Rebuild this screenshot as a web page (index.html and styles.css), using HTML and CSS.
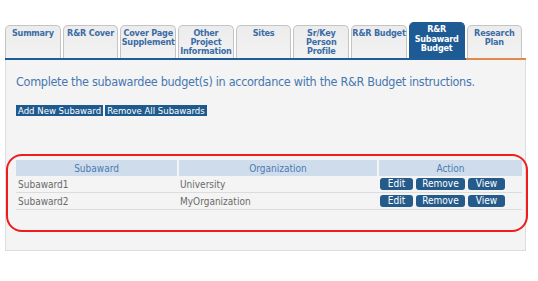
FILE: index.html
```html
<!DOCTYPE html>
<html>
<head>
<meta charset="utf-8">
<link rel="stylesheet" href="styles.css">
</head>
<body>
<div class="page">
  <div class="tabs">
    <div class="tab">Summary</div>
    <div class="tab">R&amp;R Cover</div>
    <div class="tab">Cover Page Supplement</div>
    <div class="tab">Other Project Information</div>
    <div class="tab">Sites</div>
    <div class="tab">Sr/Key Person Profile</div>
    <div class="tab">R&amp;R Budget</div>
    <div class="tab active">R&amp;R Subaward Budget</div>
    <div class="tab">Research Plan</div>
  </div>
  <div class="progress"><div class="done"></div><div class="todo"></div></div>
  <div class="panel">
    <p class="intro">Complete the subawardee budget(s) in accordance with the R&amp;R Budget instructions.</p>
    <div class="toolbar">
      <span class="tbtn">Add New Subaward</span>
      <span class="tbtn">Remove All Subawards</span>
    </div>
    <div class="tablewrap">
      <table class="grid">
        <thead>
          <tr><th class="c1">Subaward</th><th class="c2">Organization</th><th class="c3">Action</th></tr>
        </thead>
        <tbody>
          <tr><td>Subaward1</td><td>University</td><td class="acts"><span class="btn edit">Edit</span><span class="btn remove">Remove</span><span class="btn view">View</span></td></tr>
          <tr><td>Subaward2</td><td>MyOrganization</td><td class="acts"><span class="btn edit">Edit</span><span class="btn remove">Remove</span><span class="btn view">View</span></td></tr>
        </tbody>
      </table>
      <div class="highlight"></div>
    </div>
  </div>
</div>
</body>
</html>
```
FILE: styles.css
```css
html, body {
  margin: 0;
  padding: 0;
  background: #ffffff;
}
.page {
  width: 538px;
  font-family: "DejaVu Sans Condensed", "DejaVu Sans", sans-serif;
}
.tabs {
  display: flex;
  align-items: flex-end;
  gap: 2px;
  padding-left: 5px;
  padding-top: 22px;
  height: 36px;
}
.tab {
  box-sizing: border-box;
  width: 55.7px;
  height: 33px;
  border: 1px solid #c4c4c4;
  border-bottom: none;
  border-radius: 5px 5px 0 0;
  background: linear-gradient(#ececec, #f2f2f2);
  color: #3b6ca5;
  font-weight: bold;
  font-size: 9px;
  letter-spacing: -0.2px;
  line-height: 9px;
  text-align: center;
  padding: 3px 0 0 0;
}
.tab.active {
  height: 36px;
  background: #1e5a94;
  border-color: #1e5a94;
  color: #ffffff;
  padding-top: 2px;
  line-height: 9.5px;
}
.progress {
  display: flex;
  margin-left: 5px;
  width: 521px;
  height: 2px;
}
.progress .done {
  width: 461px;
  background: #1f5c9a;
}
.progress .todo {
  flex: 1;
  background: #e0894b;
}
.panel {
  box-sizing: border-box;
  margin-left: 5px;
  width: 521px;
  height: 191px;
  background: #f4f4f4;
  border: 1px solid #dddddd;
  border-top: none;
  padding: 14px 0 0 10px;
}
.intro {
  margin: 0;
  font-size: 12.5px;
  letter-spacing: -0.3px;
  line-height: 16px;
  color: #4677b0;
}
.toolbar {
  display: flex;
  gap: 2px;
  margin-top: 15px;
}
.tbtn {
  background: #1e5a8e;
  color: #ffffff;
  font-size: 9.5px;
  line-height: 11px;
  padding: 0 2px;
}
.tablewrap {
  position: relative;
  margin-top: 44px;
  width: 506px;
}
.grid {
  width: 506px;
  border-collapse: collapse;
  font-size: 10px;
  color: #6a6a6a;
  table-layout: fixed;
}
.grid th {
  background: #cfdcec;
  color: #4b7bb2;
  font-weight: normal;
  height: 16px;
  padding: 0;
  border-left: 2px solid #f4f4f4;
}
.grid th.c1 { width: 161px; border-left: none; }
.grid th.c2 { width: 198px; }
.grid td {
  height: 16px;
  padding: 0 0 0 2px;
  border-bottom: 1px solid #dcdcdc;
  text-align: left;
}
.grid td.acts {
  padding-left: 2px;
}
.btn {
  display: inline-block;
  box-sizing: border-box;
  height: 12px;
  line-height: 12px;
  margin-right: 3px;
  vertical-align: middle;
  background: #245b8b;
  border-radius: 3px;
  color: #ffffff;
  font-size: 10px;
  text-align: center;
}
.btn.edit { width: 33px; }
.btn.remove { width: 49px; }
.btn.view { width: 37px; }
.highlight {
  position: absolute;
  left: -10px;
  top: -6px;
  width: 522px;
  height: 78px;
  box-sizing: border-box;
  border: 2px solid #ee1c1c;
  border-radius: 16px;
}
```
